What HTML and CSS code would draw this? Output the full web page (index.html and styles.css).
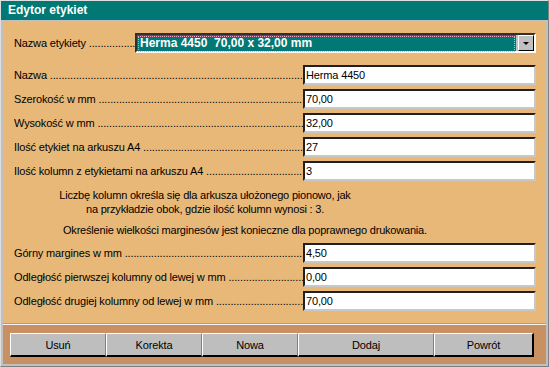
FILE: index.html
```html
<!DOCTYPE html>
<html lang="pl">
  <head>
    <meta charset="UTF-8" />
    <title>Edytor etykiet</title>
    <link rel="stylesheet" href="styles.css">
  </head>
  <body>
    <div class="window">
      <div class="titlebar">Edytor etykiet</div>
      <div class="panel">
        <div class="row combo-row">
          <span class="label">Nazwa etykiety </span>
          <div class="combo">
            <div class="combo-value"><span>Herma 4450  70,00 x 32,00 mm</span></div>
            <div class="combo-btn"><span class="arrow"></span></div>
          </div>
        </div>

        <div class="row">
          <span class="label">Nazwa </span>
          <div class="field">Herma 4450</div>
        </div>
        <div class="row">
          <span class="label">Szerokość w mm </span>
          <div class="field">70,00</div>
        </div>
        <div class="row">
          <span class="label">Wysokość w mm </span>
          <div class="field">32,00</div>
        </div>
        <div class="row">
          <span class="label">Ilość etykiet na arkuszu A4 </span>
          <div class="field">27</div>
        </div>
        <div class="row">
          <span class="label">Ilość kolumn z etykietami na arkuszu A4 </span>
          <div class="field">3</div>
        </div>

        <div class="info">
          <p class="info-cols">Liczbę kolumn określa się dla arkusza ułożonego pionowo, jak<br />na przykładzie obok, gdzie ilość kolumn wynosi : 3.</p>
          <p class="info-margin">Określenie wielkości marginesów jest konieczne dla poprawnego drukowania.</p>
        </div>

        <div class="row">
          <span class="label">Górny margines w mm </span>
          <div class="field">4,50</div>
        </div>
        <div class="row">
          <span class="label">Odległość pierwszej kolumny od lewej w mm </span>
          <div class="field">0,00</div>
        </div>
        <div class="row">
          <span class="label">Odległość drugiej kolumny od lewej w mm </span>
          <div class="field">70,00</div>
        </div>
      </div>

      <div class="footer">
        <div class="buttons">
          <button class="btn btn-usun">Usuń</button>
          <button class="btn btn-korekta">Korekta</button>
          <button class="btn btn-nowa">Nowa</button>
          <button class="btn btn-dodaj">Dodaj</button>
          <button class="btn btn-powrot">Powrót</button>
        </div>
      </div>
    </div>
  </body>
</html>
```

FILE: styles.css
```css
body {
  margin: 0;
  font-family: "Liberation Sans", Arial, sans-serif;
  font-size: 11px;
  color: #000;
  background: #c0c0c0;
}
.window {
  width: 549px;
  height: 367px;
  box-sizing: border-box;
  border: 1px solid;
  border-color: #dfdfdf #808080 #808080 #dfdfdf;
  background: #c0c0c0;
  display: flex;
  flex-direction: column;
}
.titlebar {
  height: 19px;
  line-height: 18px;
  background: #007873;
  color: #fff;
  font-weight: 700;
  font-size: 12px;
  padding-left: 7px;
}
.panel {
  margin: 2px 2px 0 2px;
  height: 301px;
  box-sizing: border-box;
  background: #e8b878;
  padding: 11px 10px 0 11px;
}
.row {
  display: flex;
  align-items: center;
  height: 20px;
  margin-bottom: 4px;
}
.combo-row {
  margin-bottom: 12px;
}
.label {
  flex: 1;
  min-width: 0;
  overflow: hidden;
  white-space: nowrap;
  letter-spacing: -0.15px;
}
.label::after {
  content: "..........................................................................................................................................";
}
.field {
  width: 233px;
  height: 20px;
  box-sizing: border-box;
  border: 2px solid;
  border-color: #202020 #c8c8c8 #c8c8c8 #202020;
  background: #fff;
  padding-left: 1px;
  line-height: 16px;
  letter-spacing: -0.15px;
}
.combo {
  width: 401px;
  height: 20px;
  box-sizing: border-box;
  border: 2px solid;
  border-color: #303030 #fff #fff #303030;
  background: #c0c0c0;
  display: flex;
}
.combo-value {
  flex: 1;
  background: #007873;
  padding: 1px;
}
.combo-value span {
  display: block;
  height: 14px;
  border: 1px dotted #f0a0c0;
  color: #fff;
  font-weight: 700;
  font-size: 12px;
  line-height: 13px;
  white-space: pre;
  padding-left: 1px;
}
.combo-btn {
  width: 14px;
  margin-left: 2px;
  border: 1px solid;
  border-color: #fff #000 #000 #fff;
  background: #c0c0c0;
  display: flex;
  align-items: center;
  justify-content: center;
}
.arrow {
  width: 0;
  height: 0;
  border-left: 3px solid transparent;
  border-right: 3px solid transparent;
  border-top: 3px solid #000;
  margin-top: 1px;
}
.info {
  padding-top: 3px;
  padding-bottom: 6px;
  letter-spacing: -0.2px;
}
.info p {
  margin: 0;
  line-height: 14px;
}
.info-cols {
  width: 300px;
  margin-left: 41px !important;
  text-align: center;
  white-space: nowrap;
}
.info-margin {
  margin-top: 7px !important;
  padding-left: 49px;
}
.footer {
  flex: 1;
  margin: 0 2px 2px 2px;
  background: #c99162;
  border-top: 1px solid #a0a0a0;
  box-shadow: inset 0 1px 0 #f4f4f4;
  padding: 9px 0 0 7px;
}
.buttons {
  display: flex;
}
.btn {
  height: 24px;
  box-sizing: border-box;
  margin: 0;
  padding: 0;
  font-family: "Liberation Sans", Arial, sans-serif;
  font-size: 11px;
  letter-spacing: -0.15px;
  color: #000;
  background: #bebebe;
  border: 1px solid;
  border-color: #fff #808080 #000 #fff;
  border-bottom-width: 2px;
}
.btn-usun { width: 96px; }
.btn-korekta { width: 96px; }
.btn-nowa { width: 96px; }
.btn-dodaj { width: 136px; }
.btn-powrot {
  width: 100px;
  border-right: 2px solid #000;
}
```
